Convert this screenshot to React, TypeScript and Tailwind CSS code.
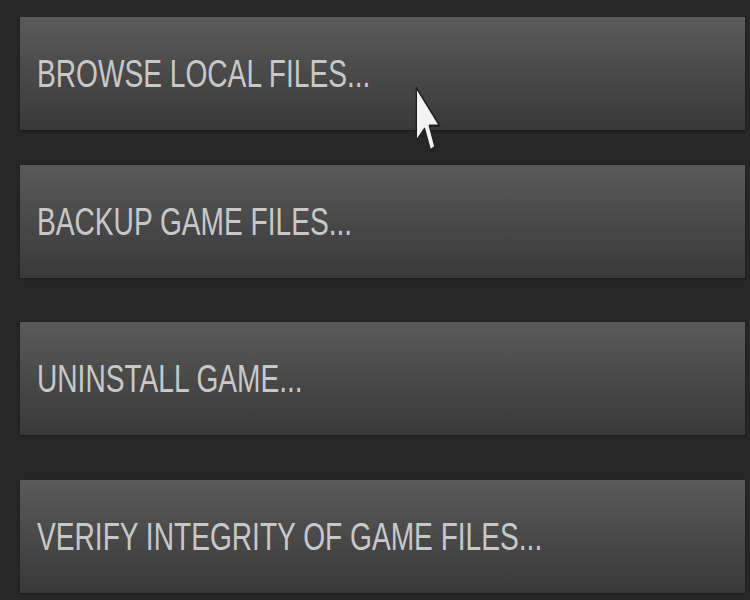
import React from 'react';

const actions = [
  { label: 'BROWSE LOCAL FILES...', gap: 'mt-[17px]' },
  { label: 'BACKUP GAME FILES...', gap: 'mt-[35px]' },
  { label: 'UNINSTALL GAME...', gap: 'mt-[44px]' },
  { label: 'VERIFY INTEGRITY OF GAME FILES...', gap: 'mt-[45px]' },
];

const Cursor: React.FC = () => (
  <svg
    className="absolute left-[414px] top-[84px] w-[28px] h-[72px] pointer-events-none"
    viewBox="0 0 12 19"
    preserveAspectRatio="none"
  >
    <path
      d="M1 1 L1 15 L4.5 11.8 L7 17.5 L9 16.6 L6.6 11 L11 11 Z"
      fill="#f4f4f4"
      stroke="#222"
      strokeWidth="0.6"
      strokeLinejoin="round"
    />
  </svg>
);

export default function App() {
  return (
    <div className="relative w-[750px] h-[600px] bg-[#262626] overflow-hidden font-['Liberation_Sans',Arial,sans-serif]">
      <div className="flex flex-col pl-[20px] pr-[5px]">
        {actions.map((a) => (
          <button
            key={a.label}
            className={`${a.gap} h-[113px] flex items-center px-[17px] bg-gradient-to-b from-[#5a5a5a] to-[#393939] shadow-[0_1px_2px_rgba(0,0,0,0.4)] text-left`}
          >
            <span className="inline-block origin-left scale-x-[0.74] whitespace-nowrap text-[38px] leading-none text-[#c8c8c8]">
              {a.label}
            </span>
          </button>
        ))}
      </div>
      <Cursor />
    </div>
  );
}
